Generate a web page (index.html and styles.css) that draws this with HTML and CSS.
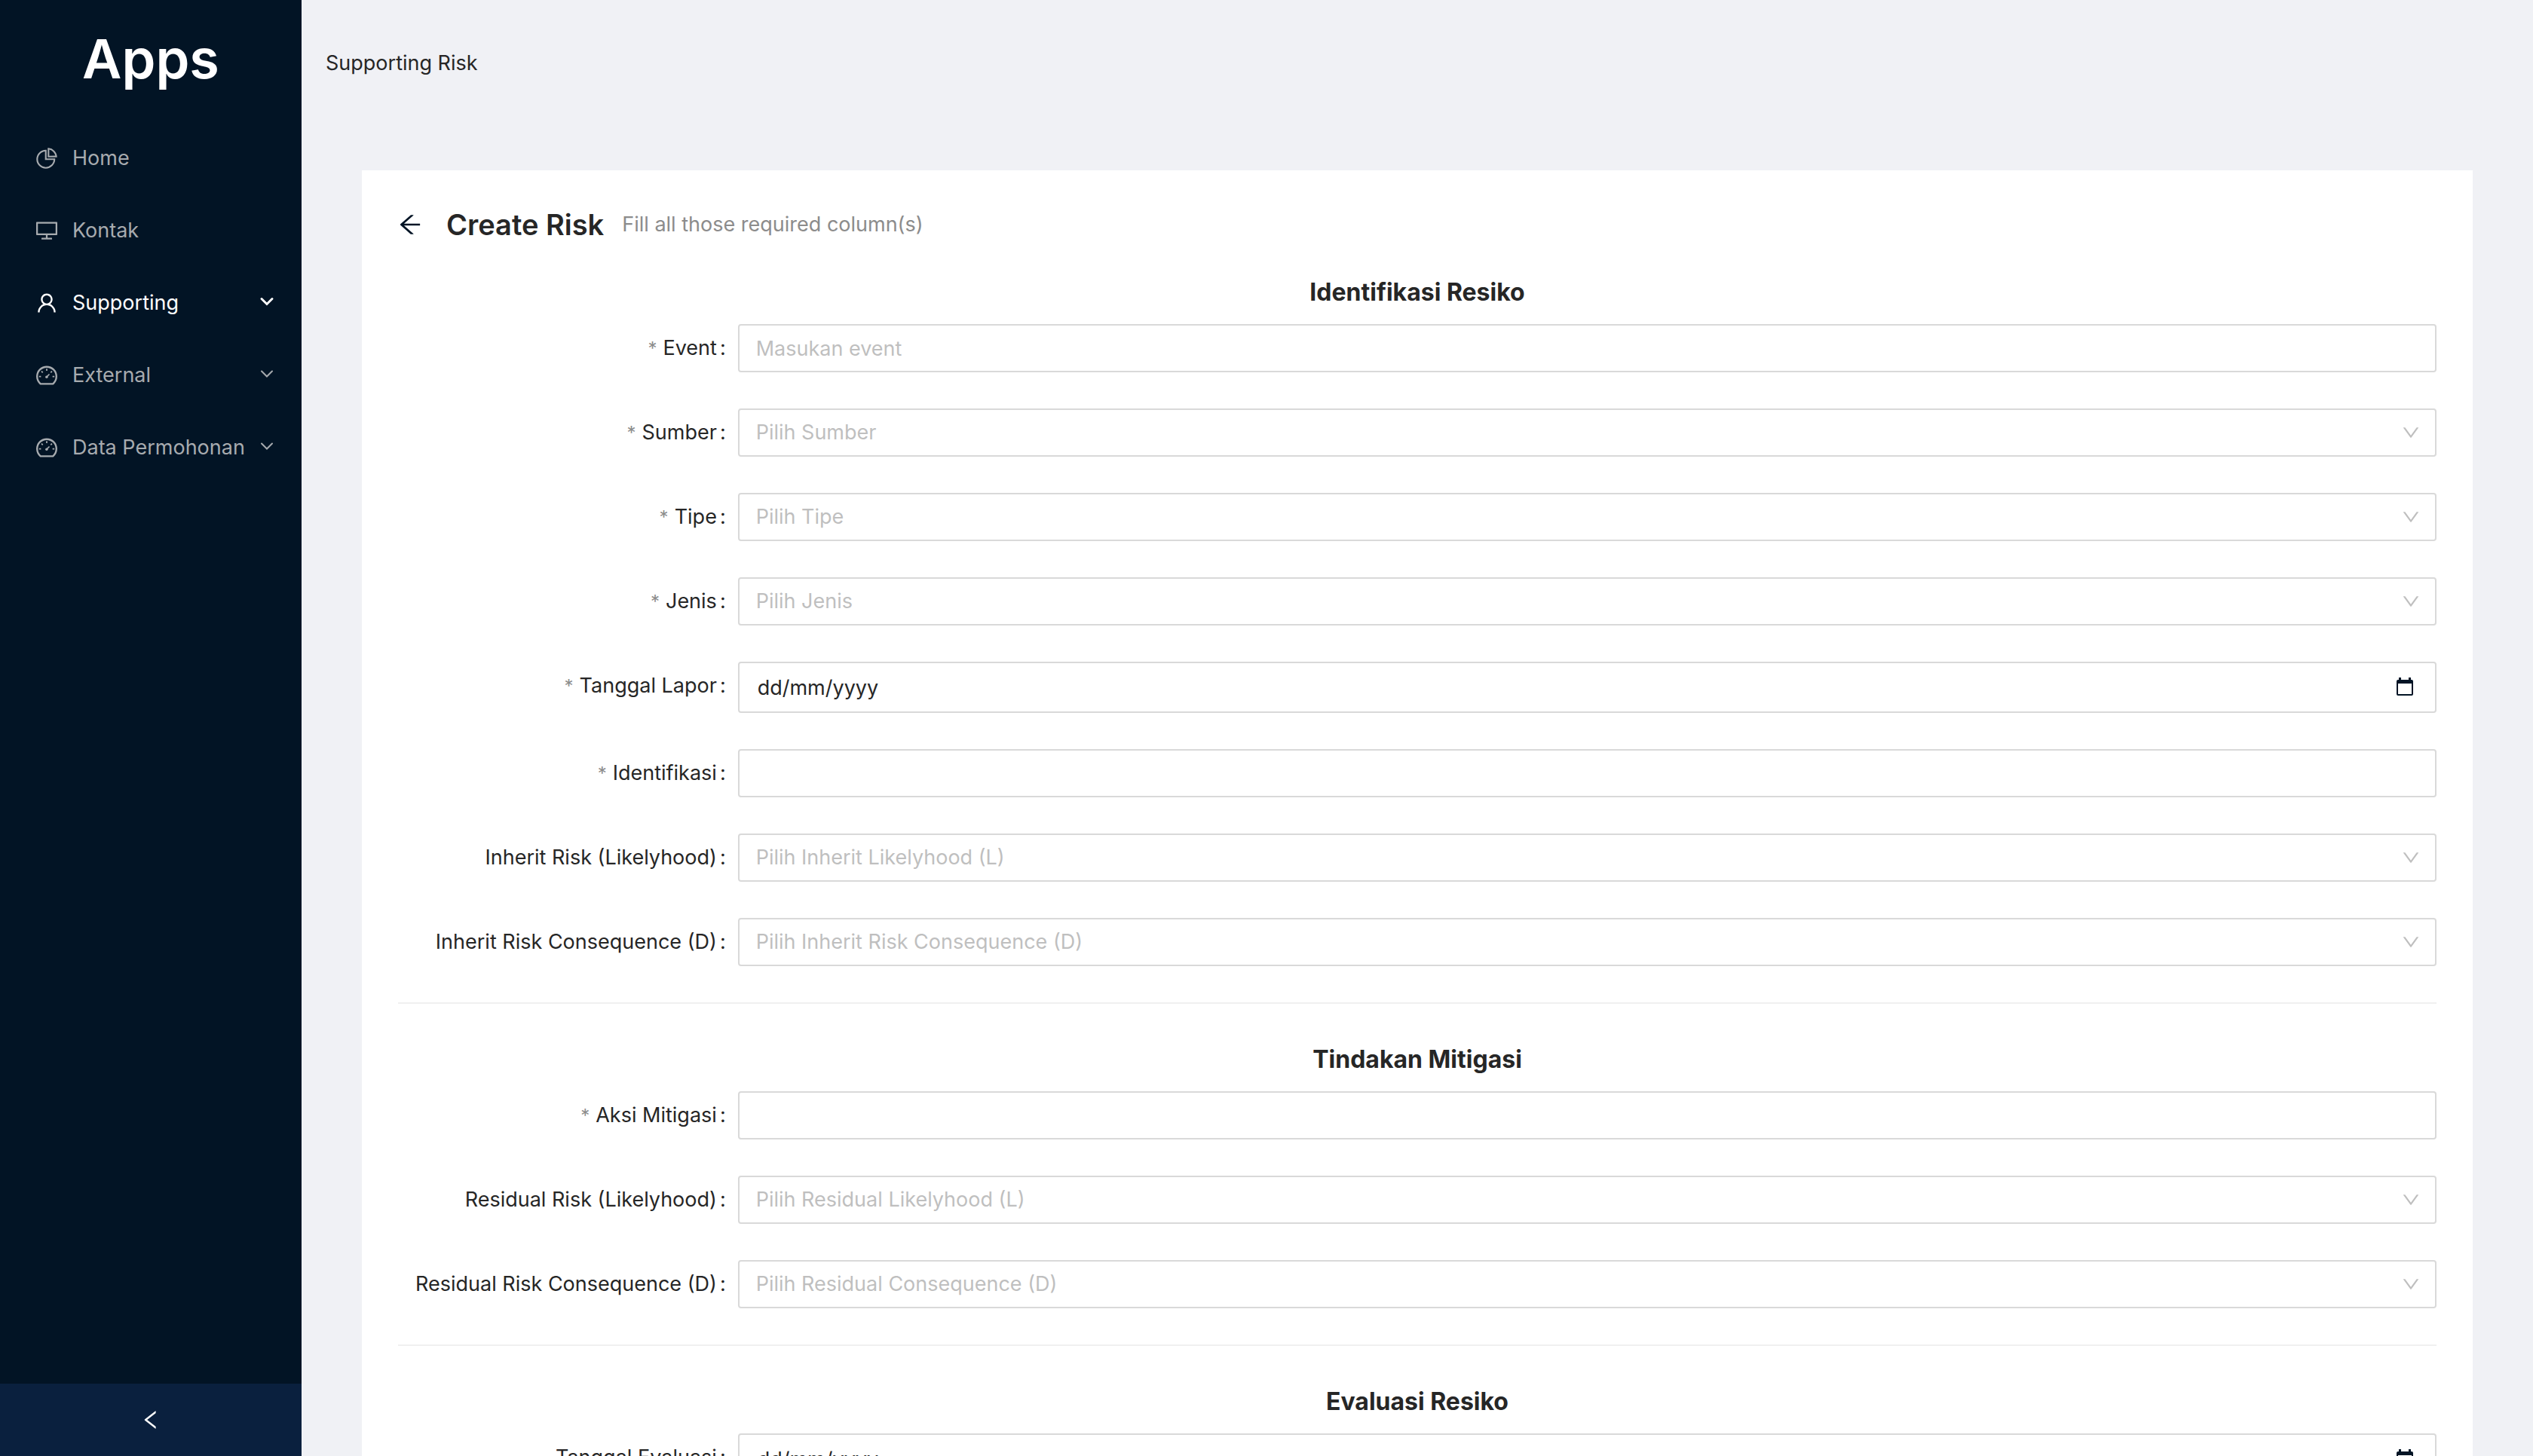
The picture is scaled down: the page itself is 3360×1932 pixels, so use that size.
FILE: index.html
```html
<!DOCTYPE html>
<html lang="id">
<head>
    <meta charset="UTF-8">
    <meta name="viewport" content="width=device-width, initial-scale=1.0">
    <title>Supporting Risk</title>
    <link rel="stylesheet" href="styles.css">
</head>
<body>
    <!-- Icon sprite -->
    <svg class="sprite" aria-hidden="true">
        <symbol id="icon-pie" viewBox="64 64 896 896"><path d="M864 518H506V160c0-4.400-3.600-8-8-8h-26a398.460 398.460 0 00-282.800 117.100 398.190 398.190 0 00-85.700 127.100A397.610 397.610 0 0072 552a398.460 398.460 0 00117.100 282.800c36.700 36.700 79.500 65.600 127.100 85.700A397.610 397.610 0 00472 952a398.460 398.460 0 00282.800-117.100c36.700-36.700 65.600-79.500 85.700-127.100A397.610 397.610 0 00872 552v-26c0-4.400-3.600-8-8-8zM705.700 787.800A331.590 331.590 0 01470.400 884c-88.100-.4-170.900-34.900-233.200-97.200C174.500 724.100 140 640.700 140 552c0-88.700 34.500-172.100 97.200-234.800 54.600-54.600 124.900-87.900 200.800-95.500V586h364.300c-7.700 76.300-41.300 147-96.600 201.800zM952 462.400l-2.600-28.200c-8.500-92.100-49.400-179-115.200-244.600A399.400 399.400 0 00589 74.600L560.700 72c-4.700-.4-8.700 3.200-8.700 7.900V464c0 4.400 3.600 8 8 8l384-1c4.700 0 8.400-4 8-8.600zm-332.200-58.200V147.600a332.240 332.240 0 01166.400 89.800c45.700 45.600 77 103.600 90 166.100l-256.400.7z"/></symbol>
        <symbol id="icon-desktop" viewBox="64 64 896 896"><path d="M928 140H96c-17.700 0-32 14.300-32 32v496c0 17.700 14.300 32 32 32h380v112H304c-8.800 0-16 7.200-16 16v48c0 4.400 3.600 8 8 8h432c4.400 0 8-3.600 8-8v-48c0-8.800-7.200-16-16-16H548V700h380c17.700 0 32-14.300 32-32V172c0-17.700-14.300-32-32-32zm-40 488H136V212h752v416z"/></symbol>
        <symbol id="icon-user" viewBox="64 64 896 896"><path d="M858.500 763.600a374 374 0 00-80.600-119.500 375.630 375.630 0 00-119.500-80.600c-.4-.2-.8-.3-1.200-.5C719.500 518 760 444.700 760 362c0-137-111-248-248-248S264 225 264 362c0 82.700 40.500 156 102.800 201.100-.4.2-.8.3-1.200.5-44.800 18.900-85 46-119.500 80.600a375.630 375.630 0 00-80.600 119.500A371.700 371.700 0 00136 901.800a8 8 0 008 8.200h60c4.400 0 7.900-3.500 8-7.800 2-77.200 33-149.500 87.800-204.300 56.700-56.700 132-87.900 212.200-87.900s155.500 31.200 212.200 87.900C779 752.700 810 825 812 902.200c.1 4.400 3.600 7.800 8 7.800h60a8 8 0 008-8.200c-1-47.800-10.900-94.300-29.500-138.200zM512 534c-45.900 0-89.100-17.900-121.600-50.400S340 407.900 340 362c0-45.900 17.900-89.100 50.400-121.600S466.100 190 512 190s89.100 17.900 121.600 50.400S684 316.100 684 362c0 45.900-17.900 89.100-50.400 121.600S557.900 534 512 534z"/></symbol>
        <symbol id="icon-dashboard" viewBox="64 64 896 896">
            <path d="M924.800 385.600a446.700 446.700 0 00-96-142.400 446.700 446.700 0 00-142.400-96C631.100 123.800 572.500 112 512 112s-119.100 11.800-174.400 35.200a446.700 446.700 0 00-142.400 96 446.700 446.700 0 00-96 142.400C75.800 440.900 64 499.500 64 560c0 132.700 58.300 257.700 159.900 343.100l1.700 1.400c5.800 4.800 13.100 7.500 20.600 7.500h531.700c7.500 0 14.800-2.700 20.600-7.500l1.700-1.400C901.700 817.700 960 692.700 960 560c0-60.500-11.900-119.100-35.200-174.400zM761.400 836H262.600A371.120 371.120 0 01140 560c0-99.400 38.700-192.800 109-263 70.300-70.300 163.700-109 263-109 99.400 0 192.800 38.700 263 109 70.300 70.300 109 163.700 109 263 0 105.600-44.500 205.500-122.600 276z"/>
            <path d="M512 232v88M186 560h82M756 560h82M290 342l52 52M512 576l112-112M682 394l52-52" fill="none" stroke="currentColor" stroke-width="56"/>
            <circle cx="508" cy="580" r="56"/>
        </symbol>
        <symbol id="icon-down" viewBox="64 64 896 896"><path d="M884 256h-75c-5.100 0-9.900 2.500-12.900 6.600L512 654.200 227.900 262.600c-3-4.100-7.800-6.600-12.900-6.600h-75c-6.500 0-10.300 7.400-6.500 12.700l352.600 486.100c12.800 17.600 39 17.600 51.700 0l352.600-486.100c3.900-5.300.1-12.700-6.400-12.700z"/></symbol>
        <symbol id="icon-left" viewBox="64 64 896 896"><path d="M724 218.300V141c0-6.700-7.700-10.400-12.900-6.300L260.300 486.800a31.860 31.860 0 000 50.300l450.800 352.100c5.300 4.100 12.900.4 12.900-6.300v-77.300c0-4.900-2.300-9.600-6.100-12.600l-360-281 360-281.100c3.800-3 6.100-7.700 6.100-12.600z"/></symbol>
        <symbol id="icon-back" viewBox="64 64 896 896"><path d="M872 474H286.900l350.200-304c5.600-4.900 2.200-14-5.200-14h-88.500c-3.900 0-7.600 1.400-10.500 3.900L155 487.800a31.960 31.960 0 000 48.300L535.100 866c1.500 1.300 3.300 2 5.200 2h91.500c7.400 0 10.800-9.200 5.200-14L286.900 550H872c4.400 0 8-3.600 8-8v-60c0-4.400-3.600-8-8-8z"/></symbol>
        <symbol id="icon-chevron" viewBox="0 0 20 20"><path d="M3 4.500l7 7 7-7" fill="none" stroke="currentColor" stroke-linecap="round"/></symbol>
        <symbol id="icon-calendar" viewBox="0 0 24 24"><path fill-rule="evenodd" d="M4 0h3v3h10V0h3v3h1a2 2 0 012 2v17a2 2 0 01-2 2H3a2 2 0 01-2-2V5a2 2 0 012-2h1zM3 8v14h18V8z"/></symbol>
    </svg>

    <div class="layout">
        <aside class="sidebar">
            <h1 class="logo">Apps</h1>
            <nav class="menu">
                <a class="menu-item" href="#">
                    <svg class="menu-icon"><use href="#icon-pie"/></svg>
                    <span>Home</span>
                </a>
                <a class="menu-item" href="#">
                    <svg class="menu-icon"><use href="#icon-desktop"/></svg>
                    <span>Kontak</span>
                </a>
                <a class="menu-item active" href="#">
                    <svg class="menu-icon"><use href="#icon-user"/></svg>
                    <span>Supporting</span>
                    <svg class="menu-arrow"><use href="#icon-chevron"/></svg>
                </a>
                <a class="menu-item" href="#">
                    <svg class="menu-icon"><use href="#icon-dashboard"/></svg>
                    <span>External</span>
                    <svg class="menu-arrow"><use href="#icon-chevron"/></svg>
                </a>
                <a class="menu-item" href="#">
                    <svg class="menu-icon"><use href="#icon-dashboard"/></svg>
                    <span>Data Permohonan</span>
                    <svg class="menu-arrow"><use href="#icon-chevron"/></svg>
                </a>
            </nav>
            <button class="collapse" type="button" aria-label="Collapse">
                <svg><use href="#icon-left"/></svg>
            </button>
        </aside>

        <div class="main">
            <header class="topbar">Supporting Risk</header>

            <main class="card">
                <div class="page-header">
                    <button class="back" type="button" aria-label="Back">
                        <svg><use href="#icon-back"/></svg>
                    </button>
                    <h2>Create Risk</h2>
                    <span class="subtitle">Fill all those required column(s)</span>
                </div>

                <form>
                    <section class="section">
                        <h3>Identifikasi Resiko</h3>
                        <div class="form-item">
                            <label class="required" for="event">Event</label>
                            <input class="control" id="event" type="text" placeholder="Masukan event">
                        </div>
                        <div class="form-item">
                            <label class="required" for="sumber">Sumber</label>
                            <div class="field">
                                <select class="control" id="sumber"><option>Pilih Sumber</option></select>
                                <svg class="select-arrow"><use href="#icon-down"/></svg>
                            </div>
                        </div>
                        <div class="form-item">
                            <label class="required" for="tipe">Tipe</label>
                            <div class="field">
                                <select class="control" id="tipe"><option>Pilih Tipe</option></select>
                                <svg class="select-arrow"><use href="#icon-down"/></svg>
                            </div>
                        </div>
                        <div class="form-item">
                            <label class="required" for="jenis">Jenis</label>
                            <div class="field">
                                <select class="control" id="jenis"><option>Pilih Jenis</option></select>
                                <svg class="select-arrow"><use href="#icon-down"/></svg>
                            </div>
                        </div>
                        <div class="form-item">
                            <label class="required" for="tanggal-lapor">Tanggal Lapor</label>
                            <div class="field">
                                <input class="control date" id="tanggal-lapor" type="text" placeholder="dd/mm/yyyy">
                                <button class="date-button" type="button" aria-label="Pilih tanggal"><svg><use href="#icon-calendar"/></svg></button>
                            </div>
                        </div>
                        <div class="form-item">
                            <label class="required" for="identifikasi">Identifikasi</label>
                            <input class="control" id="identifikasi" type="text">
                        </div>
                        <div class="form-item">
                            <label for="inherit-l">Inherit Risk (Likelyhood)</label>
                            <div class="field">
                                <select class="control" id="inherit-l"><option>Pilih Inherit Likelyhood (L)</option></select>
                                <svg class="select-arrow"><use href="#icon-down"/></svg>
                            </div>
                        </div>
                        <div class="form-item">
                            <label for="inherit-d">Inherit Risk Consequence (D)</label>
                            <div class="field">
                                <select class="control" id="inherit-d"><option>Pilih Inherit Risk Consequence (D)</option></select>
                                <svg class="select-arrow"><use href="#icon-down"/></svg>
                            </div>
                        </div>
                    </section>

                    <section class="section">
                        <h3>Tindakan Mitigasi</h3>
                        <div class="form-item">
                            <label class="required" for="aksi">Aksi Mitigasi</label>
                            <input class="control" id="aksi" type="text">
                        </div>
                        <div class="form-item">
                            <label for="residual-l">Residual Risk (Likelyhood)</label>
                            <div class="field">
                                <select class="control" id="residual-l"><option>Pilih Residual Likelyhood (L)</option></select>
                                <svg class="select-arrow"><use href="#icon-down"/></svg>
                            </div>
                        </div>
                        <div class="form-item">
                            <label for="residual-d">Residual Risk Consequence (D)</label>
                            <div class="field">
                                <select class="control" id="residual-d"><option>Pilih Residual Consequence (D)</option></select>
                                <svg class="select-arrow"><use href="#icon-down"/></svg>
                            </div>
                        </div>
                    </section>

                    <section class="section">
                        <h3>Evaluasi Resiko</h3>
                        <div class="form-item">
                            <label for="tanggal-evaluasi">Tanggal Evaluasi</label>
                            <div class="field">
                                <input class="control date" id="tanggal-evaluasi" type="text" placeholder="dd/mm/yyyy">
                                <button class="date-button" type="button" aria-label="Pilih tanggal"><svg><use href="#icon-calendar"/></svg></button>
                            </div>
                        </div>
                    </section>
                </form>
            </main>
        </div>
    </div>
</body>
</html>
```

FILE: styles.css
```css
* {
    box-sizing: border-box;
}

body {
    margin: 0;
    font-family: Inter, "Liberation Sans", sans-serif;
    font-size: 27px;
    line-height: 44px;
    color: #262626;
    background-color: #f0f1f5;
}

h1, h2, h3 {
    margin: 0;
    font-weight: 600;
}

svg {
    display: block;
    fill: currentColor;
}

button {
    padding: 0;
    border: none;
    background: none;
    color: inherit;
    cursor: pointer;
}

.sprite {
    position: absolute;
    width: 0;
    height: 0;
}

.layout {
    display: flex;
    height: 100vh;
}

/* Sidebar */
.sidebar {
    display: flex;
    flex-direction: column;
    flex: 0 0 400px;
    background-color: #021425;
}

.logo {
    padding-top: 32px;
    font-size: 72px;
    line-height: 92px;
    text-align: center;
    color: #fff;
}

.menu {
    display: flex;
    flex-direction: column;
    flex: 1;
    gap: 16px;
    padding-top: 46px;
}

.menu-item {
    display: flex;
    align-items: center;
    height: 80px;
    padding: 0 36px 0 48px;
    color: #a7abaf;
    text-decoration: none;
    white-space: nowrap;
}

.menu-item.active {
    color: #fff;
}

.menu-icon {
    width: 28px;
    height: 28px;
    margin-right: 20px;
}

.menu-arrow {
    width: 20px;
    height: 20px;
    margin-left: auto;
    stroke-width: 2;
}

.active .menu-arrow {
    stroke-width: 3;
}

.collapse {
    display: flex;
    align-items: center;
    justify-content: center;
    height: 96px;
    background-color: #0a203e;
    color: #fff;
}

.collapse svg {
    width: 28px;
    height: 28px;
}

/* Content */
.main {
    flex: 1;
    min-width: 0;
    overflow-y: auto;
    scrollbar-width: none;
}

.topbar {
    display: flex;
    align-items: center;
    height: 168px;
    padding: 0 32px;
}

.card {
    margin: 58px 80px;
    padding: 40px 48px;
    background-color: #fff;
}

.page-header {
    display: flex;
    align-items: center;
    height: 64px;
    margin-bottom: 32px;
}

.page-header h2 {
    margin: 0 24px 0 32px;
    font-size: 38px;
}

.back {
    color: #021425;
}

.back svg {
    width: 32px;
    height: 32px;
}

.subtitle {
    color: #8c8c8c;
}

/* Form */
.section + .section {
    padding-top: 48px;
    border-top: 2px solid #f0f0f0;
}

.section h3 {
    margin-bottom: 16px;
    font-size: 32px;
    font-weight: 700;
    line-height: 52px;
    text-align: center;
}

.form-item {
    display: grid;
    grid-template-columns: 1fr 5fr;
    align-items: start;
    margin-bottom: 48px;
}

.form-item label {
    padding-right: 16px;
    line-height: 64px;
    text-align: right;
    white-space: nowrap;
}

.form-item label::after {
    content: ":";
    margin-left: 4px;
}

.form-item label.required::before {
    content: "*";
    margin-right: 8px;
    font-size: 24px;
    line-height: 1;
    color: #8c8c8c;
}

.field {
    position: relative;
}

.control {
    display: block;
    width: 100%;
    height: 64px;
    padding: 0 22px;
    border: 2px solid #d9d9d9;
    border-radius: 4px;
    background-color: #fff;
    font: inherit;
    color: #262626;
}

select.control {
    appearance: none;
    color: #bfbfbf;
}

.control::placeholder {
    color: #bfbfbf;
    opacity: 1;
}

.control.date {
    height: 68px;
    padding: 0 24px;
}

.control.date::placeholder {
    color: #262626;
}

.select-arrow {
    position: absolute;
    top: 20px;
    right: 22px;
    width: 24px;
    height: 24px;
    color: #bfbfbf;
    pointer-events: none;
}

.date-button {
    position: absolute;
    top: 21px;
    right: 30px;
    color: #021425;
}

.date-button svg {
    width: 24px;
    height: 24px;
}
```
